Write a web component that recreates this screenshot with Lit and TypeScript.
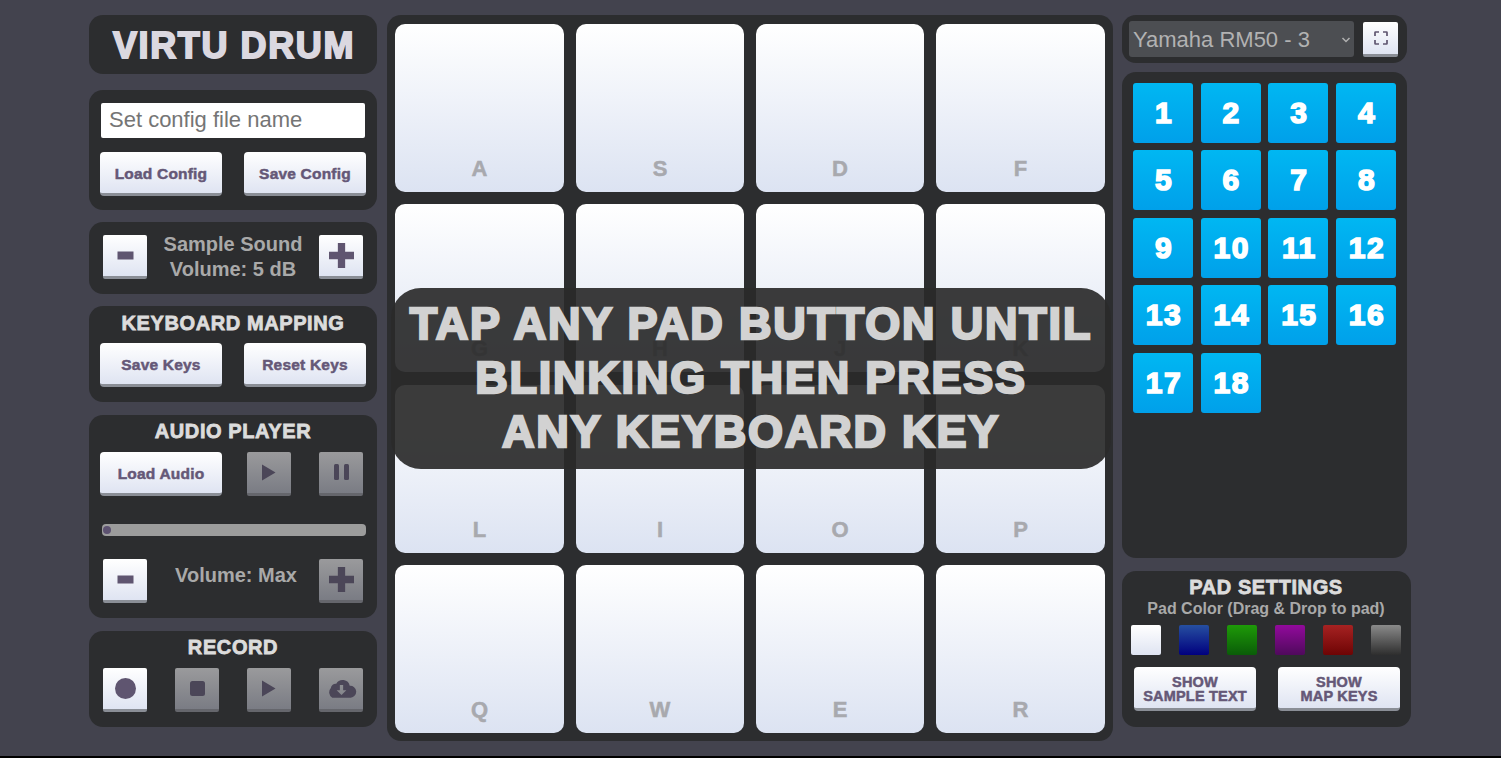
import { LitElement, html, css, svg } from "lit";
import { customElement } from "lit/decorators.js";

const iMinus = svg`<rect x="3.500" y="7.500" width="16" height="8" fill="currentColor"/>`;
const iPlus = svg`<path d="M8.500 0h7v8.500h8.500v7h-8.500v8.500h-7v-8.500h-8.500v-7h8.500z" fill="currentColor"/>`;
const iPlay = svg`<path d="M3 2.500 L16.500 10.500 L3 18.500z" fill="currentColor"/>`;
const iPause = svg`<rect x="2" y="2" width="5" height="16" rx="1.500" fill="currentColor"/><rect x="12" y="2" width="5" height="16" rx="1.500" fill="currentColor"/>`;
const iRec = svg`<circle cx="10.500" cy="10.500" r="10.500" fill="currentColor"/>`;
const iStop = svg`<rect x="0" y="0" width="15" height="15" rx="2.500" fill="currentColor"/>`;
const iCloud = svg`<path fill-rule="evenodd" fill="currentColor" d="M24.500 7.700A7.500 7.500 0 0 0 10.600 5.600 5 5 0 0 0 5 10 6.500 6.500 0 0 0 6.500 20h19a6 6 0 0 0-1-12.300zM14.300 7h3.400v5.200h3.300L16 17.300l-5-5.100h3.300z"/>`;
const iFull = svg`<path d="M1 5V1.500Q1 1 1.500 1H5M9 1h3.500q.5 0 .5.5V5M13 9v3.500q0 .5-.5.5H9M5 13H1.500Q1 13 1 12.500V9" fill="none" stroke="currentColor" stroke-width="1.700"/>`;

const ic = (w: number, h: number, vb: string, body: unknown) =>
  html`<svg width=${w} height=${h} viewBox=${vb}>${body}</svg>`;

const keys = ["A","S","D","F","G","H","J","K","L","I","O","P","Q","W","E","R"];
const swatches = ["white","blue","green","purple","red","gray"];

@customElement("app-root")
export class AppRoot extends LitElement {
  static styles = css`
    :host { display: block; width: 1501px; height: 758px; overflow: hidden; background: #43434e; font-family: "Liberation Sans", Arial, sans-serif; }
    * { box-sizing: border-box; }
    .page { display: flex; align-items: flex-start; height: 756px; padding: 15px 0 0 89px; }
    .bottom { height: 2px; background: #000; }
    .left { width: 288px; display: flex; flex-direction: column; }
    .panel { background: #2c2d2f; border-radius: 14px; }
    .title { height: 59px; margin-bottom: 16px; display: flex; align-items: center; justify-content: center; }
    .title span { font-size: 36px; font-weight: 700; color: #dbd8e0; -webkit-text-stroke: 1.800px #dbd8e0; letter-spacing: 1.600px; line-height: 1; padding: 2px 0 0 2px; }
    .config { height: 120px; margin-bottom: 12px; padding: 12.500px 11px 0; }
    .inp { height: 35.500px; width: 264px; margin-left: 1px; background: #fff; border-radius: 2px; color: #757575; font-size: 22px; padding-left: 8px; display: flex; align-items: center; margin-bottom: 14px; }
    .between { display: flex; justify-content: space-between; align-items: flex-start; width: 266px; }
    .btn { width: 122px; height: 43.500px; border-radius: 4px; background: linear-gradient(#ffffff, #dfe4f2); border-bottom: 3px solid #8a8e96; color: #655877; font-size: 15.500px; font-weight: 700; letter-spacing: .2px; -webkit-text-stroke: .5px #655877; display: flex; align-items: center; justify-content: center; padding: 3px 0 0; }
    .sq { width: 44px; height: 44px; border-radius: 2px; background: linear-gradient(#ffffff, #dfe4f2); border-bottom: 3px solid #8a8e96; color: #5f5570; display: flex; align-items: center; justify-content: center; padding-bottom: 1px; flex: none; }
    .sq.off { background: linear-gradient(#9a9a9c, #7a7c84); border-bottom-color: #65666c; color: #4b4658; }
    .vol { height: 72px; margin-bottom: 12px; padding: 13px 14px 0; display: flex; justify-content: space-between; }
    .vol .t { color: #a9a9a9; font-size: 20px; font-weight: 700; line-height: 25px; text-align: center; margin-top: -3px; }
    .map { height: 96px; margin-bottom: 13px; padding: 6px 11px 0; }
    .h { color: #dcdcdc; font-size: 20px; font-weight: 700; -webkit-text-stroke: .8px #dcdcdc; letter-spacing: .6px; line-height: 22px; text-align: center; width: 266px; }
    .map .h { margin-bottom: 9px; }
    .aud { height: 203px; margin-bottom: 13px; padding: 5px 11px 0; }
    .aud .h { margin-bottom: 10px; }
    .row { display: flex; align-items: flex-start; }
    .btn-gap { margin-left: 25px; }
    .btn-gap2 { margin-left: 28px; }
    .slider { width: 264px; height: 12px; margin: 28px 0 0 2px; border-radius: 4px; background: #9c9c9c; position: relative; }
    .knob { position: absolute; left: 1px; top: 2px; width: 8px; height: 8px; border-radius: 50%; background: #5c5170; }
    .vol2 { display: flex; justify-content: space-between; width: 260px; margin: 23px 0 0 3px; }
    .vol2 .t { color: #a9a9a9; font-size: 20px; font-weight: 700; line-height: 22px; padding: 5px 0 0 6px; text-align: center; flex: 1; }
    .rec { height: 96px; padding: 5px 14px 0; }
    .rec .h { width: 260px; margin-bottom: 10px; }
    .rec .row { gap: 28px; }
    .center { width: 726px; height: 726px; margin: 0 9px 0 10px; background: #2c2d2f; border-radius: 14px; position: relative; padding: 9px 8px; }
    .grid { display: grid; grid-template-columns: 169px 168px 168px 169px; grid-template-rows: repeat(4, 168px); column-gap: 12px; row-gap: 12.330px; }
    .pad { border-radius: 10px; background: linear-gradient(#ffffff, #dce3f2); color: #a8a9ae; font-size: 22px; font-weight: 700; -webkit-text-stroke: .5px #a8a9ae; text-align: center; display: flex; align-items: flex-end; justify-content: center; padding-bottom: 11px; line-height: 25px; }
    .overlay { position: absolute; left: 4px; top: 273px; width: 720px; height: 181px; border-radius: 30px; background: rgba(42, 42, 42, 0.92); color: #d2d2d2; font-size: 45px; font-weight: 700; -webkit-text-stroke: 2.400px #d2d2d2; letter-spacing: 1.800px; line-height: 54px; text-align: center; padding-top: 9px; white-space: nowrap; }
    .right { width: 289px; display: flex; flex-direction: column; }
    .selp { width: 285px; height: 48px; margin-bottom: 9px; padding: 6px 9px 0 7px; display: flex; justify-content: space-between; align-items: flex-start; }
    .sel { width: 225px; height: 36px; background: #4c4e52; border-radius: 3px; color: #b2b2b2; font-size: 22px; padding: 1px 3px 0 4px; display: flex; align-items: center; justify-content: space-between; }
    .fs { width: 35px; height: 35px; border-radius: 2px; background: linear-gradient(#ffffff, #dfe4f2); border-bottom: 3px solid #8a8e96; color: #5f5570; display: flex; align-items: center; justify-content: center; margin-top: 1px; padding-bottom: 1px; }
    .nums { width: 285px; height: 486px; margin-bottom: 13px; padding: 11px 11px 0; display: grid; grid-template-columns: repeat(4, 60px); grid-auto-rows: 60px; column-gap: 7.670px; row-gap: 7.450px; align-content: start; }
    .num { border-radius: 3px; background: linear-gradient(#00b7f2, #00a0ea); color: #fff; font-size: 30px; font-weight: 700; -webkit-text-stroke: 1.600px #fff; display: flex; align-items: center; justify-content: center; letter-spacing: 1.500px; padding-left: 2px; }
    .set { width: 289px; height: 156px; padding: 5px 9px 0; }
    .set .h { width: 270px; line-height: 23px; }
    .sub { color: #a9a9a9; font-size: 16px; font-weight: 700; text-align: center; width: 270px; line-height: 19px; margin-bottom: 7px; }
    .sw-row { display: flex; justify-content: space-between; width: 270px; margin-bottom: 12px; }
    .sw { width: 30px; height: 30px; border-radius: 2px; }
    .white { background: linear-gradient(#ffffff, #dfe4f2); }
    .blue { background: linear-gradient(#264fa0, #00007f); }
    .green { background: linear-gradient(#1e9a08, #0a5c08); }
    .purple { background: linear-gradient(#920a9c, #4f0a5c); }
    .red { background: linear-gradient(#a62222, #6e0404); }
    .gray { background: linear-gradient(#8a8a8a, #2e2e2e); }
    .show { display: flex; justify-content: space-between; width: 266px; margin-left: 3px; }
    .show .btn { line-height: 14px; font-size: 14.500px; text-align: center; padding: 3px 0 0; }
  `;

  render() {
    return html`
      <div class="page">
        <div class="left">
          <div class="panel title"><span>VIRTU DRUM</span></div>
          <div class="panel config">
            <div class="inp">Set config file name</div>
            <div class="between"><div class="btn">Load Config</div><div class="btn">Save Config</div></div>
          </div>
          <div class="panel vol">
            <div class="sq">${ic(23, 23, "0 0 23 23", iMinus)}</div>
            <div class="t">Sample Sound<br />Volume: 5 dB</div>
            <div class="sq">${ic(25, 25, "0 0 24 24", iPlus)}</div>
          </div>
          <div class="panel map">
            <div class="h">KEYBOARD MAPPING</div>
            <div class="between"><div class="btn">Save Keys</div><div class="btn">Reset Keys</div></div>
          </div>
          <div class="panel aud">
            <div class="h">AUDIO PLAYER</div>
            <div class="row">
              <div class="btn">Load Audio</div>
              <div class="sq off btn-gap">${ic(20, 21, "0 0 20 21", iPlay)}</div>
              <div class="sq off btn-gap2">${ic(19, 20, "0 0 19 20", iPause)}</div>
            </div>
            <div class="slider"><div class="knob"></div></div>
            <div class="vol2">
              <div class="sq">${ic(23, 23, "0 0 23 23", iMinus)}</div>
              <div class="t">Volume: Max</div>
              <div class="sq off">${ic(25, 25, "0 0 24 24", iPlus)}</div>
            </div>
          </div>
          <div class="panel rec">
            <div class="h">RECORD</div>
            <div class="row">
              <div class="sq">${ic(21, 21, "0 0 21 21", iRec)}</div>
              <div class="sq off">${ic(15, 15, "0 0 15 15", iStop)}</div>
              <div class="sq off">${ic(20, 21, "0 0 20 21", iPlay)}</div>
              <div class="sq off">${ic(31, 21, "0 0 32 21", iCloud)}</div>
            </div>
          </div>
        </div>
        <div class="center">
          <div class="grid">${keys.map((k) => html`<div class="pad">${k}</div>`)}</div>
          <div class="overlay">TAP ANY PAD BUTTON UNTIL<br />BLINKING THEN PRESS<br />ANY KEYBOARD KEY</div>
        </div>
        <div class="right">
          <div class="panel selp">
            <div class="sel"><span>Yamaha RM50 - 3</span>
              <svg width="10" height="8" viewBox="0 0 10 8"><path d="M1.500 2 L5 5.500 L8.500 2" fill="none" stroke="#b0b0b0" stroke-width="1.500"/></svg>
            </div>
            <div class="fs">${ic(14, 14, "0 0 14 14", iFull)}</div>
          </div>
          <div class="panel nums">
            ${Array.from({ length: 18 }, (_, i) => html`<div class="num">${i + 1}</div>`)}
          </div>
          <div class="panel set">
            <div class="h">PAD SETTINGS</div>
            <div class="sub">Pad Color (Drag &amp; Drop to pad)</div>
            <div class="sw-row">${swatches.map((s) => html`<div class="sw ${s}"></div>`)}</div>
            <div class="show">
              <div class="btn">SHOW<br />SAMPLE TEXT</div>
              <div class="btn">SHOW<br />MAP KEYS</div>
            </div>
          </div>
        </div>
      </div>
      <div class="bottom"></div>
    `;
  }
}
